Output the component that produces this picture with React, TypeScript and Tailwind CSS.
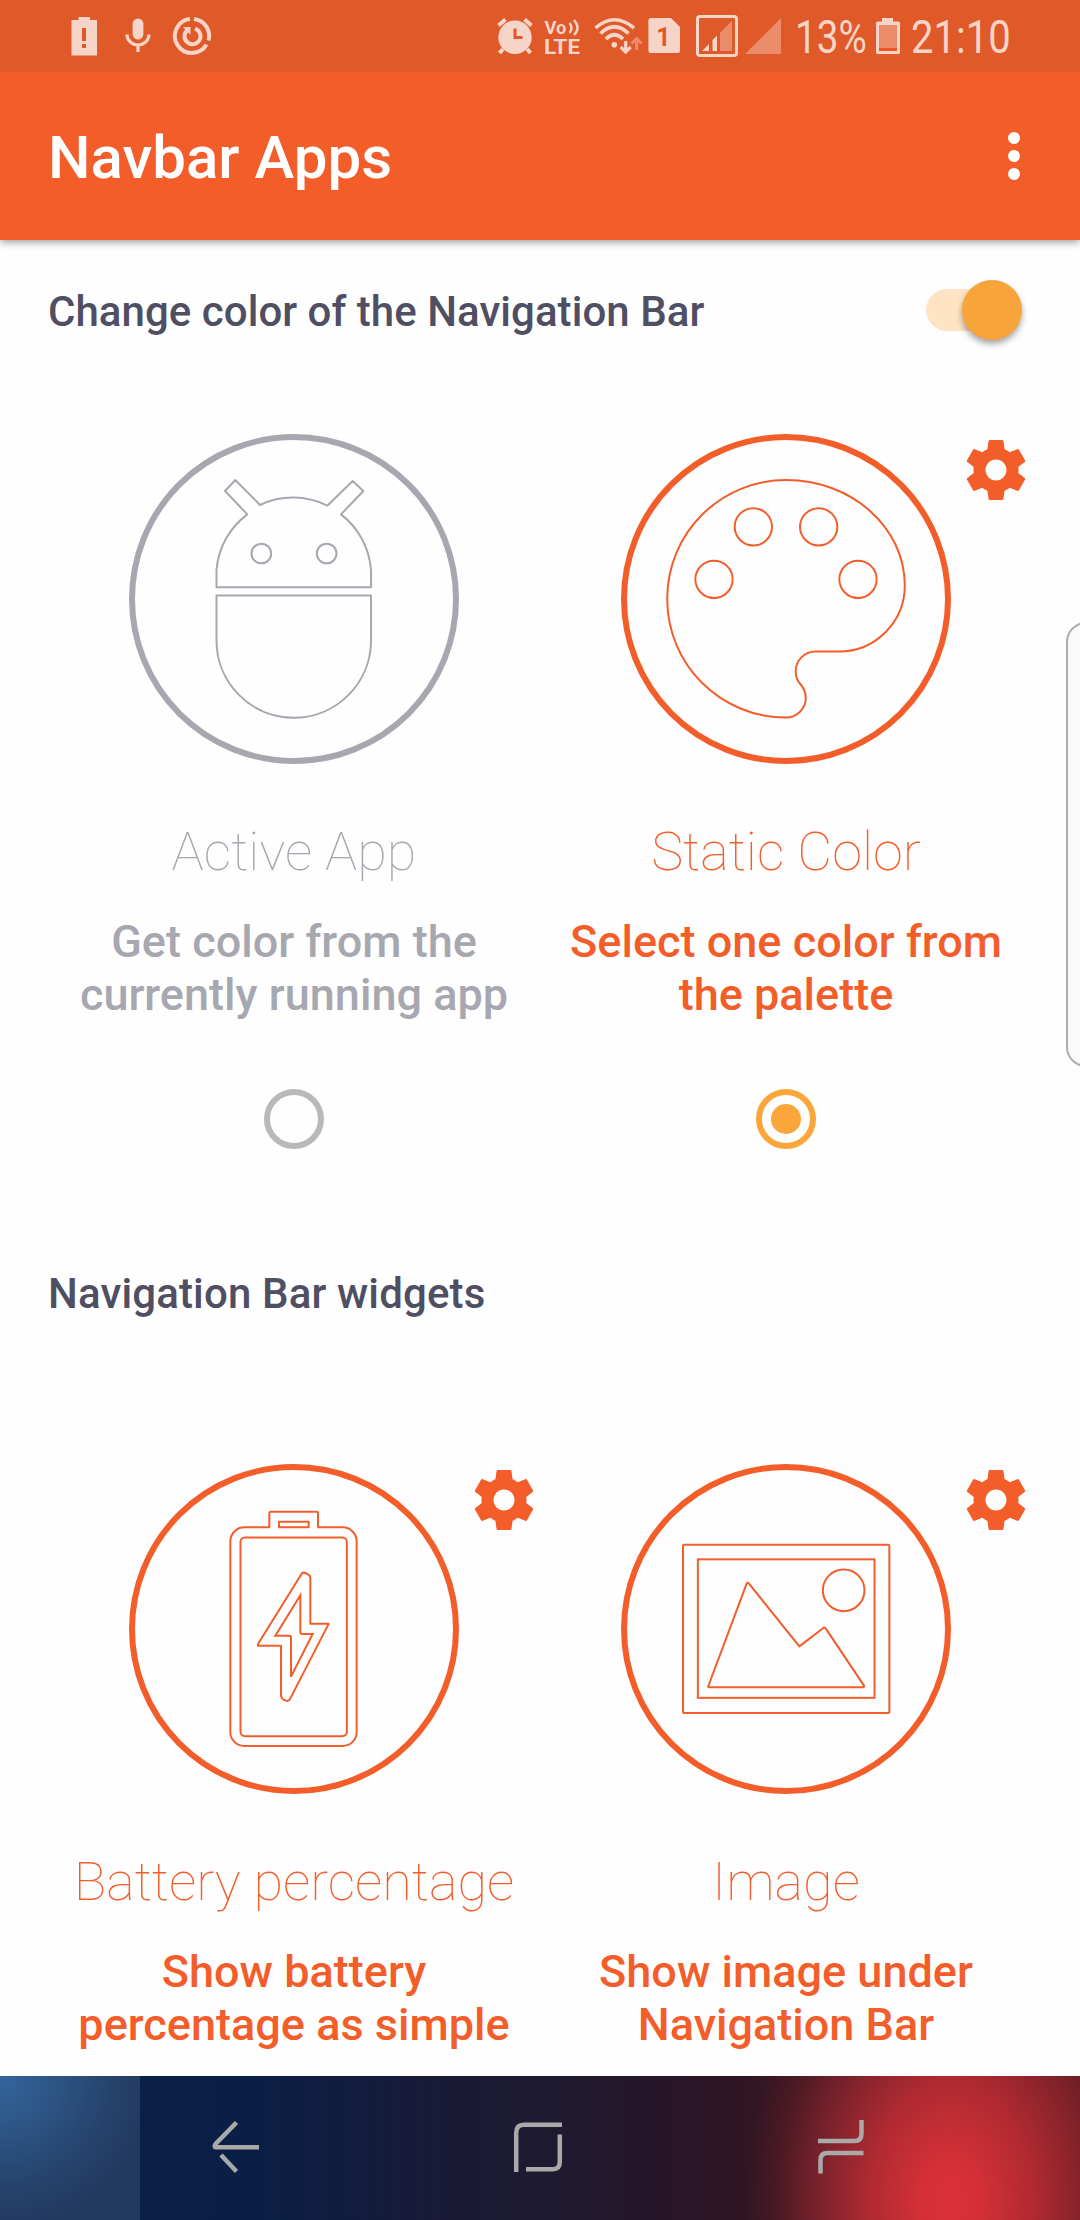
import type { ReactNode } from "react";

const TINT = "#f7d4c8";
const DIM = "#eb8c6a";
const BAR = "#df5929";

function Gear() {
  return (
    <svg viewBox="0 0 24 24" className="size-[72px]" fill="#f35d2a">
      <path d="M19.43 12.98c.04-.32.07-.64.07-.98s-.03-.66-.07-.98l2.11-1.65c.19-.15.24-.42.12-.64l-2-3.46c-.12-.22-.39-.3-.61-.22l-2.49 1c-.52-.4-1.08-.73-1.69-.98l-.38-2.65C14.46 2.18 14.25 2 14 2h-4c-.25 0-.46.18-.49.42l-.38 2.65c-.61.25-1.17.59-1.69.98l-2.49-1c-.23-.09-.49 0-.61.22l-2 3.46c-.13.22-.07.49.12.64l2.11 1.65c-.04.32-.07.65-.07.98s.03.66.07.98l-2.11 1.65c-.19.15-.24.42-.12.64l2 3.46c.12.22.39.3.61.22l2.49-1c.52.4 1.08.73 1.69.98l.38 2.65c.03.24.24.42.49.42h4c.25 0 .46-.18.49-.42l.38-2.65c.61-.25 1.17-.59 1.69-.98l2.49 1c.23.09.49 0 .61-.22l2-3.46c.12-.22.07-.49-.12-.64l-2.11-1.65zM12 15.5c-1.93 0-3.5-1.57-3.5-3.5s1.57-3.5 3.5-3.5 3.5 1.57 3.5 3.5-1.57 3.5-3.5 3.5z" />
    </svg>
  );
}

function Android() {
  return (
    <svg viewBox="57 42 990 990" className="size-[330px]" fill="none" stroke="currentColor" strokeWidth="6" strokeLinejoin="round">
      <circle cx="552" cy="537" r="486" strokeWidth="18" />
      <path d="M319.500 502H783V450A232 232 0 0 0 693 283L760 213L728 183L652 257A232 232 0 0 0 450 255L376 180L345 213L412 283A232 232 0 0 0 319.500 450Z" />
      <path d="M319.500 526.500H783V661.500A231.750 231.750 0 0 1 319.500 661.500Z" />
      <circle cx="454" cy="400.500" r="29.500" />
      <circle cx="650" cy="400.500" r="29.500" />
    </svg>
  );
}

function Palette() {
  return (
    <svg viewBox="63 42 990 990" className="size-[330px]" fill="none" stroke="currentColor" strokeWidth="6">
      <circle cx="558" cy="537" r="486" strokeWidth="18" />
      <path
        transform="translate(82.800 61.200) scale(39.600)"
        strokeWidth="0.150"
        d="M12 3c-4.970 0-9 4.030-9 9s4.030 9 9 9c.83 0 1.500-.67 1.500-1.500 0-.39-.15-.74-.39-1.010-.23-.26-.38-.61-.38-.99 0-.83.67-1.500 1.500-1.500H16c2.760 0 5-2.240 5-5 0-4.420-4.030-8-9-8z"
      />
      <circle cx="342" cy="478" r="56" />
      <circle cx="460" cy="320.500" r="56" />
      <circle cx="656" cy="320.500" r="56" />
      <circle cx="774" cy="478" r="56" />
    </svg>
  );
}

function Battery() {
  return (
    <svg viewBox="57 72 990 990" className="size-[330px]" fill="none" stroke="currentColor" strokeWidth="6" strokeLinejoin="round">
      <circle cx="552" cy="567" r="486" strokeWidth="18" />
      <path d="M478 262V219Q478 215 482 215H620Q624 215 624 219V262H698A42 42 0 0 1 740 304V876A42 42 0 0 1 698 918H403A42 42 0 0 1 361 876V304A42 42 0 0 1 403 262Z" />
      <rect x="507" y="245" width="89" height="17" />
      <rect x="391.500" y="292.500" width="319" height="596" rx="13" />
      <path d="M575 401Q580 396 586 399L594 403Q601 407 601 413V551.500H656L539 779Q534 785 528 782L519 778Q513 773 513 767V617H444V612Z" />
      <path d="M571 466V576Q571 582 577 582H608L543 710V592Q543 587 538 587H496Z" strokeLinejoin="miter" />
    </svg>
  );
}

function Picture() {
  return (
    <svg viewBox="63 72 990 990" className="size-[330px]" fill="none" stroke="currentColor" strokeWidth="6" strokeLinejoin="round">
      <circle cx="558" cy="567" r="486" strokeWidth="18" />
      <rect x="249" y="314" width="619" height="505" rx="3" />
      <rect x="293.500" y="358" width="530" height="415.500" strokeLinejoin="miter" />
      <circle cx="731" cy="451" r="62.500" />
      <path d="M325 738L440 431Q443 426 447 431L598 619L670 564Q674 561 677 565L792 737Q793 742 788 742H328Q323 742 325 738Z" />
    </svg>
  );
}

function Radio({ on }: { on: boolean }) {
  return (
    <span
      className={
        on
          ? "flex size-[60px] items-center justify-center rounded-full border-6 border-[#fba63b]"
          : "flex size-[60px] items-center justify-center rounded-full border-6 border-[#b9b9b9]"
      }
    >
      {on && <span className="size-[30px] rounded-full bg-[#fba63b]" />}
    </span>
  );
}

type CardProps = {
  art: ReactNode;
  title: string;
  lines: [string, string];
  muted?: boolean;
  gear?: boolean;
  radio?: boolean;
};

function Card({ art, title, lines, muted, gear, radio }: CardProps) {
  return (
    <div className={muted ? "relative flex flex-col items-center text-[#a7a7b0]" : "relative flex flex-col items-center text-[#f35d2a]"}>
      {art}
      {gear && (
        <div className="absolute right-0 top-0">
          <Gear />
        </div>
      )}
      <h3 className="mt-[56px] whitespace-nowrap text-[54px] font-thin leading-[64px]">{title}</h3>
      <p className="mt-[31px] whitespace-nowrap text-center text-[45px] font-medium leading-[53px] tracking-[0.02px]">
        {lines[0]}
        <br />
        {lines[1]}
      </p>
      {radio !== undefined && (
        <div className="mt-[68px]">
          <Radio on={radio} />
        </div>
      )}
    </div>
  );
}

function StatusBar() {
  return (
    <div className="relative z-10 flex h-[72px] shrink-0 justify-between bg-[#df5929] text-[#f7d4c8]">
      <div className="ml-[68px] flex gap-4">
        <svg viewBox="68 0 32 72" className="h-[72px] w-8" fill={TINT}>
          <path d="M78.500 17H90V20H97V55.500H71.500V20H78.500Z" />
          <path d="M82 28h4v13h-4zM82 44h4v4h-4z" fill={BAR} />
        </svg>
        <svg viewBox="116 0 44 72" className="h-[72px] w-11" fill={TINT}>
          <rect x="132.600" y="18.500" width="10.800" height="21" rx="5.400" />
          <path d="M127 34.500a11 10.500 0 0 0 22 0M138 45v7" fill="none" stroke={TINT} strokeWidth="3.200" />
        </svg>
        <svg viewBox="170 0 44 72" className="-ml-[6px] h-[72px] w-11" fill="none" stroke={TINT} strokeWidth="4">
          <path d="M190 19A17 17 0 1 0 206.500 44.500M194 19A17 17 0 0 1 208.500 40.500" />
          <path d="M195 28.600A8 8 0 1 1 188 29.600" />
          <path d="M183 27h7.500v8z" fill={TINT} stroke="none" />
        </svg>
      </div>
      <div className="mr-[70px] flex items-center">
        <svg viewBox="494 0 42 72" className="h-[72px] w-[42px]">
          <circle cx="515" cy="37.300" r="16.700" fill={TINT} />
          <path d="M498.500 25.500l7-6M531.500 25.500l-7-6" stroke={TINT} strokeWidth="4" />
          <path d="M503 49l-3.500 4M527 49l3.500 4" stroke={TINT} strokeWidth="4" />
          <path d="M515 28.500V37.500H522.500" fill="none" stroke={BAR} strokeWidth="3" />
        </svg>
        <svg viewBox="536 0 48 72" className="h-[72px] w-12" fill={TINT} fontFamily="Roboto, sans-serif" fontWeight="700">
          <text x="544.500" y="33.500" fontSize="19" textLength="22" lengthAdjust="spacingAndGlyphs">Vo</text>
          <path d="M569.500 23q4 5 0 10M574 20q7 8 0 15" fill="none" stroke={TINT} strokeWidth="2.400" />
          <text x="544" y="53.500" fontSize="21" textLength="36" lengthAdjust="spacingAndGlyphs">LTE</text>
        </svg>
        <svg viewBox="590 0 54 72" className="ml-[6px] h-[72px] w-[54px]" fill="none" stroke={TINT} strokeWidth="3.600">
          <path d="M595.500 28Q614.300 11.500 634 28M600.500 33.500Q614.300 20 628.500 33.500M605.800 39Q614.300 30.500 623 39" />
          <circle cx="614.300" cy="44.700" r="2.800" fill={TINT} stroke="none" />
          <path d="M625.700 41V51M620.700 47l5 5 5-5" strokeWidth="3.200" />
          <path d="M636.600 50V40M631.600 43.500l5-5 5 5" stroke={DIM} strokeWidth="3" />
        </svg>
        <svg viewBox="646 0 38 72" className="ml-0.5 h-[72px] w-[38px]" fill={TINT}>
          <path d="M651 18H671L680 27V50.500Q680 53 677.500 53H651Q648.400 53 648.400 50.500V20.500Q648.400 18 651 18Z" />
          <text x="663.500" y="46" fontSize="25" fontWeight="700" textAnchor="middle" fontFamily="Roboto, sans-serif" fill={BAR}>1</text>
        </svg>
        <svg viewBox="694 0 46 72" className="ml-2.5 h-[72px] w-[46px]" fill={TINT}>
          <rect x="697.500" y="16.500" width="39" height="39" rx="2.500" fill="none" stroke={TINT} strokeWidth="3" />
          <path d="M702 51L709 44V51ZM712.500 51V40L717 35.500V51Z" />
          <path d="M720 51V33L732 21V51Z" fill={DIM} />
        </svg>
        <svg viewBox="742 0 42 72" className="ml-0.5 h-[72px] w-[42px]">
          <path d="M745 54L781 18V54Z" fill={DIM} />
        </svg>
        <div className="ml-[11px] w-[78px] origin-left scale-x-[0.840] whitespace-nowrap pt-px text-[46px] leading-[72px]">13%</div>
        <svg viewBox="874 0 28 72" className="ml-[1px] h-[72px] w-7">
          <path d="M882 18H893V21.500H898.500Q900 21.500 900 23V52.500Q900 54 898.500 54H877.500Q876 54 876 52.500V23Q876 21.500 877.500 21.500H882Z" fill={TINT} />
          <path d="M879 25h18v23h-18z" fill={DIM} />
          <path d="M879 48h18v3h-18z" fill="#f45320" />
        </svg>
        <div className="ml-[9px] w-[99px] origin-left scale-x-[0.870] whitespace-nowrap pt-px text-[46px] leading-[72px]">21:10</div>
      </div>
    </div>
  );
}

function NavBar() {
  return (
    <div className="flex h-[144px] shrink-0 bg-[radial-gradient(ellipse_205px_290px_at_950px_125px,#dd3138_0%,#d83137f5_15%,#c82e36d0_40%,#a82a3290_65%,#80222840_85%,#70202600_100%),linear-gradient(90deg,#0b2148_0,#0a1f45_250px,#111d3f_340px,#1a1a36_450px,#1f1a30_560px,#261629_650px,#301524_740px,#3a1722_800px,#54181e_1080px)]">
      <div className="w-[140px] bg-[radial-gradient(ellipse_150px_150px_at_0px_0px,#33659c_0%,#2d5686_35%,#26426c_75%,#233a60_100%)]" />
      <div className="flex flex-1 items-center">
        <svg viewBox="204 2076 64 144" className="ml-16 h-[144px] w-16" fill="none" stroke="#a9a9a9" strokeWidth="4.500">
          <path d="M236.500 2122.500L216 2143.500Q213 2147.300 217 2147.300H259M221 2155L236.500 2171.500" />
        </svg>
        <svg viewBox="506 2076 64 144" className="ml-[238px] h-[144px] w-16" fill="none" stroke="#a9a9a9" strokeWidth="4.500">
          <path d="M516.200 2172V2133Q516.200 2124.800 524 2124.800H562M526 2169.200H553Q559.800 2169.200 559.800 2162V2134.500" />
        </svg>
        <svg viewBox="808 2076 64 144" className="ml-[238px] h-[144px] w-16" fill="none" stroke="#a9a9a9" strokeWidth="4.500">
          <path d="M861.500 2120V2134Q861.500 2141 854.500 2141H818M820.500 2173.500V2160Q820.500 2153 827.500 2153H863.500" />
        </svg>
      </div>
    </div>
  );
}

export default function App() {
  return (
    <div className="relative flex h-[2220px] w-[1080px] flex-col overflow-hidden bg-[#fefefe] font-['Roboto',sans-serif]">
      <StatusBar />
      <header className="flex h-[168px] shrink-0 items-center justify-between bg-[#f35d2a] pl-12 pr-[60px] text-white shadow-[0_2px_8px_rgba(0,0,0,0.4)]">
        <h1 className="pt-1 text-[60px] font-medium leading-[70px]">Navbar Apps</h1>
        <div className="flex flex-col gap-1.5">
          <span className="size-3 rounded-full bg-white" />
          <span className="size-3 rounded-full bg-white" />
          <span className="size-3 rounded-full bg-white" />
        </div>
      </header>

      <main className="flex min-h-0 flex-1 flex-col overflow-hidden px-12">
        <div className="flex h-[142px] items-center justify-between pr-[10px]">
          <h2 className="pt-0.5 text-[42px] font-medium leading-[50px] tracking-[0.04px] text-[#4f4e63]">Change color of the Navigation Bar</h2>
          <div className="mb-[2px] flex h-[42px] w-[96px] items-center justify-end rounded-full bg-linear-to-r from-[#fee3c4] from-60% to-transparent to-60%">
            <span className="size-[60px] shrink-0 rounded-full bg-[#f7a43b] shadow-[0_4px_6px_rgba(0,0,0,0.35)]" />
          </div>
        </div>
        <div className="mt-[52px] grid grid-cols-2">
          <Card art={<Android />} title="Active App" lines={["Get color from the", "currently running app"]} muted radio={false} />
          <Card art={<Palette />} title="Static Color" lines={["Select one color from", "the palette"]} gear radio />
        </div>
        <h2 className="mt-[120px] text-[42px] font-medium leading-[50px] tracking-[0.14px] text-[#4f4e63]">Navigation Bar widgets</h2>
        <div className="mt-[145px] grid grid-cols-2">
          <Card art={<Battery />} title="Battery percentage" lines={["Show battery", "percentage as simple"]} gear />
          <Card art={<Picture />} title="Image" lines={["Show image under", "Navigation Bar"]} gear />
        </div>
      </main>

      <NavBar />

      {/* Edge panel handle */}
      <div className="absolute -right-[10px] top-[622px] h-[445px] w-[24px] rounded-l-[20px] border-2 border-[#adadad] bg-[#fafafa]" />
    </div>
  );
}
